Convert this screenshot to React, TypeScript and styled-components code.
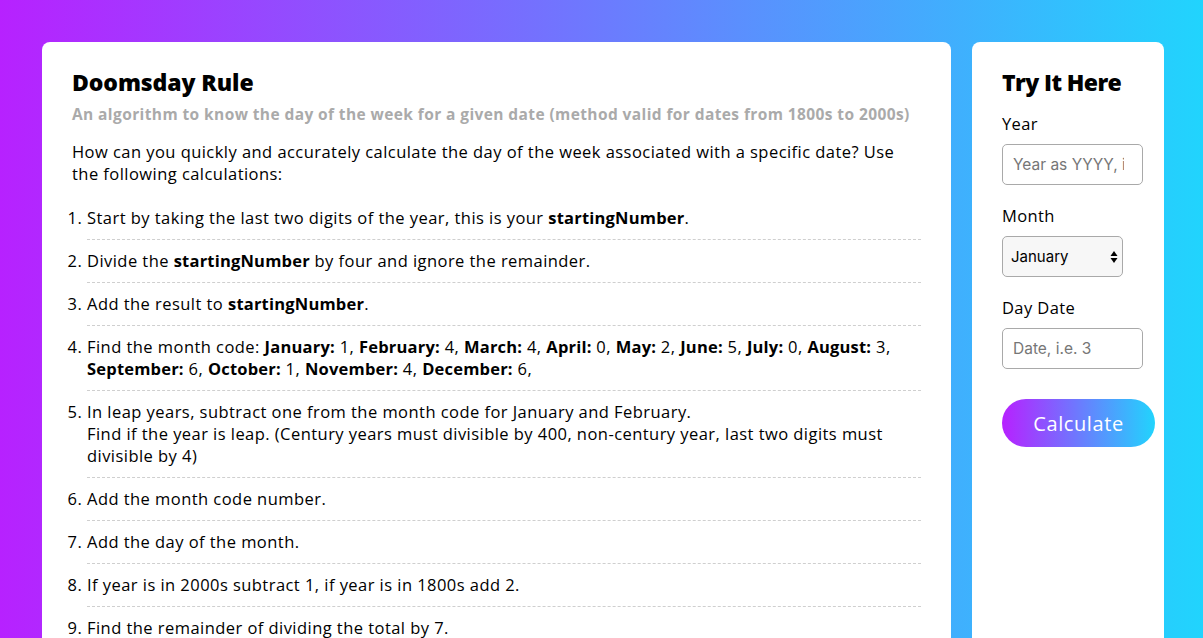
import React from "react";
import styled, { createGlobalStyle } from "styled-components";

const GlobalStyle = createGlobalStyle`
  html, body { margin: 0; padding: 0; }
  body {
    font-family: "Open Sans", "DejaVu Sans", sans-serif;
    background: linear-gradient(90deg, #b721ff 0%, #21d4fd 100%);
    min-height: 100vh;
  }
`;

const Page = styled.div`
  display: flex;
  align-items: flex-start;
  gap: 21px;
  padding: 42px 39px 0 42px;
`;

const Card = styled.section<{ $width?: number }>`
  background: #fff;
  border-radius: 8px;
  padding: 25px 30px 30px;
  box-sizing: border-box;
  ${(p) => (p.$width ? `width: ${p.$width}px; flex: none;` : "flex: 1;")}
  min-height: 700px;
`;

const Title = styled.h1`
  margin: 0;
  font-size: 23px;
  line-height: 30px;
  font-weight: 800;
  color: #000;
  letter-spacing: -0.1px;
`;

const Subtitle = styled.h2`
  margin: 6px 0 0;
  font-size: 15.5px;
  line-height: 22px;
  font-weight: 700;
  color: #aaa;
  letter-spacing: 0.4px;
`;

const Intro = styled.p`
  margin: 16px 0 0;
  font-size: 16.5px;
  line-height: 22px;
  color: #000;
  letter-spacing: 0.45px;
`;

const Steps = styled.ol`
  margin: 22px 0 0;
  padding: 0 0 0 15px;
`;

const Step = styled.li`
  font-size: 16.5px;
  line-height: 22px;
  letter-spacing: 0.45px;
  color: #000;
  padding: 10px 0 10px 0;
  border-bottom: 1px dashed #cfcfcf;
  &:first-child { padding-top: 0; }
  b { font-weight: 700; letter-spacing: 0.2px; }
`;

const FormTitle = styled(Title)`
  margin-bottom: 16px;
  letter-spacing: -0.6px;
`;

const Label = styled.label`
  display: block;
  font-size: 16.5px;
  line-height: 22px;
  letter-spacing: 0.4px;
  color: #000;
  margin: 0 0 9px;
`;

const Field = styled.div`
  margin-bottom: 20px;
`;

const TextInput = styled.input`
  box-sizing: border-box;
  width: 141px;
  height: 41px;
  border: 1px solid #a9a9a9;
  border-radius: 5px;
  padding: 0 18px 0 10px;
  font-family: "Inter", "Liberation Sans", sans-serif;
  font-size: 15.5px;
  color: #000;
  background: #fff;
  outline: none;
  &::placeholder { color: #767676; }
`;

const Select = styled.select`
  box-sizing: border-box;
  width: 121px;
  height: 41px;
  border: 1px solid #a9a9a9;
  border-radius: 5px;
  padding: 0 10px 0 8px;
  font-family: "Inter", "Liberation Sans", sans-serif;
  font-size: 15px;
  color: #000;
  appearance: none;
  background-color: #f7f7f7;
  background-image: url("data:image/svg+xml;utf8,<svg xmlns='http://www.w3.org/2000/svg' width='8' height='14' viewBox='0 0 8 14'><path d='M4 1 L7.5 6 H0.5 Z' fill='black'/><path d='M4 13 L7.5 8 H0.5 Z' fill='black'/></svg>");
  background-repeat: no-repeat;
  background-position: right 4px center;
  outline: none;
`;

const Button = styled.button`
  margin-top: 10px;
  width: 153px;
  height: 48px;
  border: none;
  border-radius: 24px;
  background: linear-gradient(90deg, #b721ff 0%, #21d4fd 100%);
  color: #fff;
  font-family: "Open Sans", sans-serif;
  font-size: 20px;
  font-weight: 500;
  letter-spacing: 0.6px;
  cursor: pointer;
`;

const months = [
  "January",
  "February",
  "March",
  "April",
  "May",
  "June",
  "July",
  "August",
  "September",
  "October",
  "November",
  "December",
];

export default function App() {
  return (
    <>
      <GlobalStyle />
      <Page>
        <Card>
          <Title>Doomsday Rule</Title>
          <Subtitle>
            An algorithm to know the day of the week for a given date (method valid for dates from 1800s to 2000s)
          </Subtitle>
          <Intro>
            How can you quickly and accurately calculate the day of the week associated with a specific date? Use
            the following calculations:
          </Intro>
          <Steps>
            <Step>
              Start by taking the last two digits of the year, this is your <b>startingNumber</b>.
            </Step>
            <Step>
              Divide the <b>startingNumber</b> by four and ignore the remainder.
            </Step>
            <Step>
              Add the result to <b>startingNumber</b>.
            </Step>
            <Step>
              Find the month code: <b>January:</b> 1, <b>February:</b> 4, <b>March:</b> 4, <b>April:</b> 0,{" "}
              <b>May:</b> 2, <b>June:</b> 5, <b>July:</b> 0, <b>August:</b> 3, <b>September:</b> 6,{" "}
              <b>October:</b> 1, <b>November:</b> 4, <b>December:</b> 6,
            </Step>
            <Step>
              In leap years, subtract one from the month code for January and February.
              <br />
              Find if the year is leap. (Century years must divisible by 400, non-century year, last two digits must
              divisible by 4)
            </Step>
            <Step>Add the month code number.</Step>
            <Step>Add the day of the month.</Step>
            <Step>If year is in 2000s subtract 1, if year is in 1800s add 2.</Step>
            <Step>Find the remainder of dividing the total by 7.</Step>
          </Steps>
        </Card>
        <Card $width={192}>
          <FormTitle>Try It Here</FormTitle>
          <Field>
            <Label htmlFor="year">Year</Label>
            <TextInput id="year" placeholder="Year as YYYY, i.e. 1990" />
          </Field>
          <Field>
            <Label htmlFor="month">Month</Label>
            <Select id="month" defaultValue="January">
              {months.map((m) => (
                <option key={m}>{m}</option>
              ))}
            </Select>
          </Field>
          <Field>
            <Label htmlFor="day">Day Date</Label>
            <TextInput id="day" placeholder="Date, i.e. 3" />
          </Field>
          <Button>Calculate</Button>
        </Card>
      </Page>
    </>
  );
}
